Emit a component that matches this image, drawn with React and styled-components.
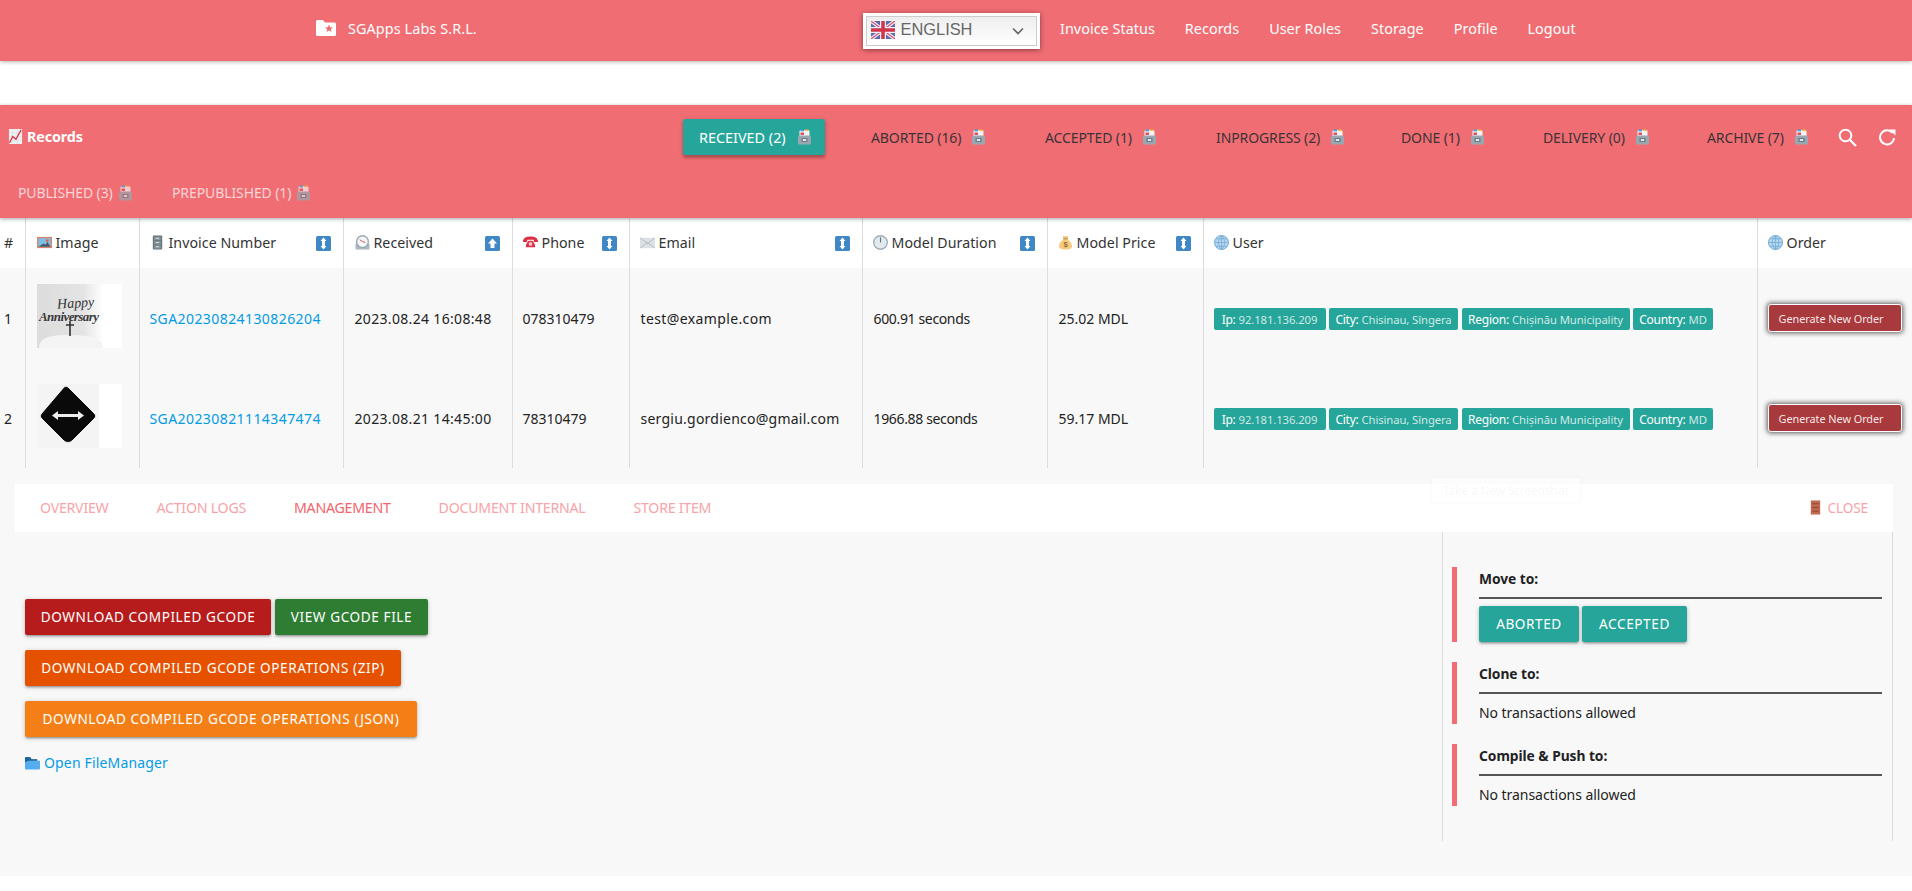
import React from "react";
import styled, { createGlobalStyle } from "styled-components";

const RED = "#f06d73";
const TEAL = "#26a69a";

const Global = createGlobalStyle`
  html, body { margin: 0; padding: 0; background: #fff; }
  body { font-family: "Noto Sans", "Open Sans", sans-serif; font-size: 14px; color: #222; overflow: hidden; }
  * { box-sizing: border-box; }
`;

const Page = styled.div`width: 1912px; height: 891px; overflow: hidden; background: #fff;`;

const Header = styled.header`
  height: 61px; background: ${RED}; display: flex; align-items: center; padding-left: 316px;
  box-shadow: 0 1px 4px rgba(0,0,0,.3); color: #fff;
`;
const Brand = styled.div`width: 547px; display: flex; align-items: center; gap: 12px; font-size: 14.4px; letter-spacing: .1px; margin-top: -5px;`;
const LangSelect = styled.div`
  width: 177px; height: 36px; background: #fff; padding: 3px; box-shadow: 0 1px 5px rgba(0,0,0,.45); margin-right: 20px; flex: none;
`;
const LangInner = styled.div`
  height: 100%; border: 1px solid #ccc; background: linear-gradient(#eee, #fff); display: flex; align-items: center;
  padding: 0 12px 0 4px; font-family: "Liberation Sans", sans-serif; font-size: 16.4px; color: #666;
  justify-content: space-between;
`;
const LangLabel = styled.span`display: flex; align-items: center; gap: 5.5px; margin-top: -2px;`;
const NavLinks = styled.nav`display: flex; gap: 30px; margin-top: -5px;`;
const NavLink = styled.a`color: #fff; font-size: 14.4px; letter-spacing: .03px; white-space: nowrap;`;

const Toolbar = styled.section`
  margin-top: 44px; height: 113px; background: ${RED}; box-shadow: 0 1px 4px rgba(0,0,0,.35); position: relative; z-index: 1;
`;
const ToolRow = styled.div`display: flex; align-items: center; height: ${p => p.$h}px; padding-left: ${p => p.$pad}px;`;
const ToolTitle = styled.div`
  width: 675px; font-weight: 700; font-size: 14.4px; color: #fff; display: flex; align-items: center; gap: 4px; letter-spacing: -.15px;
  margin-top: -1px;
`;
const Tab = styled.div`
  width: ${p => p.$w}px; flex: none; display: flex; align-items: center; gap: ${p => p.$muted ? 5 : 10}px; font-size: 14px; letter-spacing: -.1px;
  color: ${p => p.$muted ? "rgba(255,255,255,.72)" : "#3c3336"}; white-space: nowrap;
`;
const TabIcon = styled.span`display: flex; opacity: ${p => p.$muted ? .7 : 1};`;
const ActiveTab = styled.div`
  width: 142px; height: 36px; margin-right: 46px; flex: none; background: ${TEAL}; color: #fff; border-radius: 2px; display: flex; align-items: center;
  padding-left: 16px; gap: 11px; font-size: 14.4px; letter-spacing: 0;
  box-shadow: 0 3px 3px rgba(0,0,0,.22), 0 1px 5px rgba(0,0,0,.15);
`;
const ToolIcon = styled.div`width: ${p => p.$w}px; flex: none; display: flex; align-items: center;`;

const Table = styled.table`
  width: 1912px; table-layout: fixed; border-collapse: collapse;
`;
const Th = styled.th`
  height: 50px; background: #fff; border-left: ${p => p.$first ? "none" : "1px solid #ddd"}; padding: 0; font-weight: 400; text-align: left;
  font-size: 14.2px; color: #333; letter-spacing: .05px;
`;
const ThInner = styled.div`display: flex; align-items: center; justify-content: space-between; padding: 0 ${p => p.$right ?? 12}px 0 ${p => p.$left ?? 10}px;`;
const ThLabel = styled.span`display: flex; align-items: center; gap: 4px; white-space: nowrap; margin-top: -2px;`;
const Tr = styled.tr`height: 100px; background: #f8f8f8;`;
const Td = styled.td`
  border-left: ${p => p.$first ? "none" : "1px solid #ddd"}; padding: 0 0 0 ${p => p.$pad ?? 10}px; font-size: 14px; color: #222; white-space: nowrap;
  letter-spacing: ${p => p.$ls ?? 0}px;
`;
const InvoiceLink = styled.a`color: #039be5; letter-spacing: .42px;`;
const Thumb = styled.div`width: 85px; height: 64px; display: block; margin-top: -4px;`;
const Chips = styled.div`display: flex; gap: 3.5px; margin-top: 2px;`;
const Chip = styled.span`
  height: 22px; width: ${p => p.$w}px; background: ${TEAL}; border-radius: 2px; color: #fff; display: flex; align-items: center; justify-content: center; gap: 3px;
  font-size: 12px; letter-spacing: -.25px;
`;
const ChipValue = styled.span`color: rgba(255,255,255,.78); font-size: 11.3px;letter-spacing: -.1px;`;
const OrderButton = styled.button`
  width: 134px; height: 28px; background: #a8393c; color: rgba(255,255,255,.9); border: 1px solid #fff; border-radius: 3px; text-align: left;
  box-shadow: 0 0 5px 1px rgba(0,0,0,.65); font: 400 10.9px "Noto Sans", sans-serif; letter-spacing: -.05px; padding: 0 0 0 10px; display: block;
`;

const Detail = styled.section`
  position: relative; height: 408px; background: #f8f8f8; padding: 16px 19px 0 15px;
`;
const Tooltip = styled.div`
  position: absolute; left: 1432px; top: 10px; width: 148px; height: 24px; display: flex; align-items: center; justify-content: center;
  font-size: 12px; letter-spacing: -.2px; color: rgba(0,0,0,.05); background: rgba(255,255,255,.5); box-shadow: 0 0 4px rgba(0,0,0,.04); z-index: 2;
`;
const DetailTabs = styled.div`height: 48px; background: #fff; display: flex; align-items: center; padding: 0 25px 0 25px; justify-content: space-between;`;
const DetailTabList = styled.div`display: flex; gap: 48px; margin-top: -2px;`;
const DetailTab = styled.a`
  font-size: 14.2px; letter-spacing: -.26px; color: ${p => p.$active ? "#f2646c" : "#f7a3a8"}; white-space: nowrap;
`;
const CloseLink = styled.a`display: flex; align-items: center; gap: 4px; font-size: 13.6px; letter-spacing: -.1px; color: #f7a3a8; margin-top: -1px;`;
const DetailBody = styled.div`display: flex; align-items: flex-start;`;
const LeftPane = styled.div`flex: 1; padding: 67px 0 0 10px;`;
const ButtonRow = styled.div`display: flex; gap: 4px; margin-bottom: 15px;`;
const Btn = styled.a`
  height: 36px; width: ${p => p.$w}px; background: ${p => p.$bg}; color: #fff; border-radius: 2px; display: flex; align-items: center; justify-content: center;
  font-size: 13.6px; letter-spacing: .58px; white-space: nowrap; padding-bottom: 2px;
  box-shadow: 0 2px 2px rgba(0,0,0,.14), 0 3px 1px -2px rgba(0,0,0,.12), 0 1px 5px rgba(0,0,0,.2);
`;
const FileLink = styled.a`display: flex; align-items: center; gap: 4px; color: #039be5; font-size: 14px; margin-top: 16px; letter-spacing: .16px;`;
const RightPane = styled.aside`
  width: 451px; height: 309px; border-left: 1px solid #ddd; border-right: 1px solid #ddd; padding: 35px 10px 0 9px; display: flex; flex-direction: column; gap: 20px; flex: none;
`;
const Transition = styled.div`border-left: 5px solid ${RED}; padding-left: 22px; height: ${p => p.$h}px;`;
const TransitionTitle = styled.div`height: 30px; padding-bottom: 8px; display: flex; align-items: center; font-weight: 700; font-size: 13.8px; color: #222; letter-spacing: -.05px;`;
const Rule = styled.div`height: 2px; background: #555;`;
const Note = styled.div`margin-top: 9px; font-size: 14px; line-height: 20px; color: #222; letter-spacing: -.05px;`;
const MoveButtons = styled.div`display: flex; gap: 3px; margin-top: 7px;`;

const Box = () => (
  <svg width="15" height="16" viewBox="0 0 15 16" style={{ flex: "none" }}>
    <path d="M2.500 7V2.500Q2.500 1 4 1h7q1.500 0 1.500 1.500V7z" fill="#f3f3f3" />
    <rect x="3.500" y="0.500" width="3.500" height="1.800" fill="#3aa0dc" />
    <rect x="8" y="0.500" width="3.500" height="1.500" fill="#f4b942" />
    <rect x="3.500" y="3.500" width="3.500" height="2.500" fill="#e0506a" />
    <path d="M2.500 6.500h10L14 8v6.500q0 1-1 1H2q-1 0-1-1V8z" fill="#99a7b1" />
    <rect x="4.500" y="9" width="6" height="4" rx=".5" fill="#6b7a84" />
    <rect x="5.800" y="10" width="3.400" height="2" fill="#e3e7ea" />
  </svg>
);
const Sort = ({ up }) => (
  <svg width="15" height="15" viewBox="0 0 15 15" style={{ flex: "none" }}>
    <rect width="15" height="15" rx="1.5" fill="#3f88c5" />
    {up
      ? <path d="M7.5 2.5 12 7.5H9.5V12h-4V7.5H3z" fill="#fff" />
      : <path d="M7.5 1.5 10.5 5H9v5h1.5l-3 3.5-3-3.5H6V5H4.500z" fill="#fff" />}
  </svg>
);
const Ico = ({ children, w = 15, h = 15 }) => (
  <svg width={w} height={h} viewBox="0 0 16 16" style={{ flex: "none" }}>{children}</svg>
);
const PictureIcon = () => <Ico><rect y="2" width="16" height="12" fill="#d9846d" /><rect x="1.500" y="3.500" width="13" height="9" fill="#7cc0e8" /><path d="M1.500 12.500 7 9l2 1.500 2-3 3.500 5z" fill="#4b5a66" /><circle cx="11" cy="6" r="1.500" fill="#e8614f" /></Ico>;
const CabinetIcon = () => <Ico><rect x="3" y="0.500" width="10" height="15" rx="1" fill="#66757f" /><rect x="4.500" y="2" width="7" height="3.500" fill="#8a979f" /><rect x="4.500" y="6.500" width="7" height="3.500" fill="#8a979f" /><rect x="4.500" y="11" width="7" height="3.500" fill="#8a979f" /><rect x="6.500" y="3" width="3" height="1" fill="#ddd" /><rect x="6.500" y="7.500" width="3" height="1" fill="#ddd" /><rect x="6.500" y="12" width="3" height="1" fill="#ddd" /></Ico>;
const MantelIcon = () => <Ico><rect x="0.500" y="9" width="15" height="6.500" rx="1" fill="#aab8c2" /><circle cx="8" cy="7" r="7" fill="#99aab5" /><circle cx="8" cy="7" r="5.500" fill="#f5f8fa" /><path d="M8 7 5 5M8 7l3 1" stroke="#d9405b" strokeWidth="1" /></Ico>;
const PhoneIcon = () => <Ico><path d="M0 6C1 2 5 1.500 8 1.500s7 .5 8 4.500v1.500h-4.500V5h-7v2.500H0z" fill="#dd2e44" /><path d="M3 13c0-4 2-6 3-7h4c1 1 3 3 3 7z" fill="#dd2e44" /><circle cx="8" cy="9.500" r="2" fill="#f7c4cb" /></Ico>;
const MailIcon = () => <Ico><rect y="3" width="16" height="11" fill="#dbe1e5" /><path d="M0 14 8 8l8 6M0 3l8 6 8-6" stroke="#a7b4bd" strokeWidth=".8" fill="none" /></Ico>;
const ClockIcon = () => <Ico><circle cx="8" cy="8" r="8" fill="#9fb0bb" /><circle cx="8" cy="8" r="6.500" fill="#e3eaee" /><path d="M8 2.500V8" stroke="#66757f" strokeWidth="1.200" /></Ico>;
const BagIcon = () => <Ico><path d="M5 1c1 .6 5 .6 6 0l-1 3.500H6z" fill="#f2c46e" /><path d="M6 4.500h4c3 2 5 5 5 7.500 0 2.500-2.500 3.500-7 3.500S1 14.500 1 12c0-2.500 2-5.500 5-7.500z" fill="#f6cb7c" /><rect x="5.500" y="3.500" width="5" height="1.200" fill="#b98a4b" /><text x="8" y="13" fontSize="8" fontWeight="700" textAnchor="middle" fill="#8d6b3b" fontFamily="Liberation Sans">$</text></Ico>;
const GlobeIcon = () => <Ico><circle cx="8" cy="8" r="7.500" fill="#b7d6ee" stroke="#6ea9d6" /><path d="M.5 8h15M8 .5v15M2 4h12M2 12h12M8 .5C3.500 4.500 3.500 11.500 8 15.500M8 .5c4.500 4 4.500 11 0 15" stroke="#6ea9d6" strokeWidth=".8" fill="none" /></Ico>;
const ChartIcon = () => <Ico><rect x="1" y="0" width="14" height="16" fill="#eef1f3" /><path d="M1 4h14M1 8h14M1 12h14M5 0v16M10 0v16" stroke="#d2d9de" strokeWidth=".5" /><path d="M1.500 15 5 8l3.500 3L14 1" stroke="#e0304a" strokeWidth="1.400" fill="none" /></Ico>;
const DoorIcon = () => <Ico><rect x="3" y="0.500" width="10" height="15" fill="#c1694f" /><path d="M4.500 4h7M4.500 8h7M4.500 12h7" stroke="#8f4b37" strokeWidth="1.200" /></Ico>;
const OpenFolder = () => <Ico><path d="M0 2.500h5.500L7 4.500h6v2H0z" fill="#226699" /><path d="M0 6h16v8.500a1 1 0 0 1-1 1H1a1 1 0 0 1-1-1z" fill="#55acee" /><path d="M0 2.500h5.500L7 4.500h6V5H5L0 8z" fill="#226699" /></Ico>;
const StarFolder = () => (
  <svg width="20" height="16" viewBox="0 0 20 16" style={{ flex: "none" }}>
    <path d="M1.500 0H7l2 2.500h9.500A1.500 1.500 0 0 1 20 4v10.500a1.500 1.500 0 0 1-1.500 1.500h-17A1.500 1.500 0 0 1 0 14.500V1.500A1.500 1.500 0 0 1 1.500 0z" fill="#fff" />
    <path d="m13 4.500 1.100 2.700 2.900.2-2.200 1.900.7 2.800-2.500-1.500-2.500 1.500.7-2.800L9 7.400l2.900-.2z" fill={RED} />
  </svg>
);
const Flag = () => (
  <svg width="24" height="18" viewBox="0 0 24 18" style={{ flex: "none" }}>
    <rect width="24" height="18" fill="#5d6aa8" />
    <path d="M0 0 24 18M24 0 0 18" stroke="#eef" strokeWidth="3.500" />
    <path d="M0 0 24 18M24 0 0 18" stroke="#d8505f" strokeWidth="1.200" />
    <path d="M12 0v18M0 9h24" stroke="#eef" strokeWidth="6" />
    <path d="M12 0v18M0 9h24" stroke="#d0354a" strokeWidth="3.500" />
  </svg>
);
const Chevron = () => (
  <svg width="12" height="8" viewBox="0 0 12 8" style={{ flex: "none" }}><path d="M1 1.500 6 6.500l5-5" stroke="#666" strokeWidth="1.700" fill="none" /></svg>
);
const SearchIcon = () => (
  <svg width="19" height="19" viewBox="0 0 19 19"><circle cx="7.500" cy="7.500" r="5.800" fill="none" stroke="#fff" strokeWidth="2" /><path d="m12 12 6 6" stroke="#fff" strokeWidth="2.200" /></svg>
);
const RefreshIcon = () => (
  <svg width="18" height="18" viewBox="0 0 18 18"><path d="M14.500 5A7 7 0 1 0 16 10" fill="none" stroke="#fff" strokeWidth="2" /><path d="M11 1h6.500v6z" fill="#fff" transform="translate(0 .5)" /></svg>
);
const ThumbOne = () => (
  <Thumb as="svg" viewBox="0 0 85 64">
    <defs>
      <linearGradient id="fade" x1="0" y1="0" x2="1" y2="0"><stop offset="0" stopColor="#dcdcdc" /><stop offset=".7" stopColor="#e4e4e4" /><stop offset="1" stopColor="#fff" /></linearGradient>
    </defs>
    <rect width="85" height="64" fill="#fff" />
    <rect width="66" height="64" fill="url(#fade)" />
    <path d="M2 64c0-10 10-13 30-13s34 3 34 13z" fill="#f4f4f4" />
    <text x="20" y="24" fontSize="14" fontStyle="italic" fill="#333" fontFamily="Liberation Serif" transform="rotate(-4 32 20)">Happy</text>
    <text x="2" y="37" fontSize="13" fontStyle="italic" fontWeight="700" fill="#3a3a3a" fontFamily="Liberation Serif" textLength="60">Anniversary</text>
    <path d="M33 37v15M29 41h8" stroke="#333" strokeWidth="1.600" />
  </Thumb>
);
const ThumbTwo = () => (
  <Thumb as="svg" viewBox="0 0 85 64">
    <rect width="85" height="64" fill="#fff" />
    <rect width="62" height="64" fill="#f4f4f4" />
    <path d="M31 3 58 30a3 3 0 0 1 0 4L35 57a6 6 0 0 1-8 0L4 34a3 3 0 0 1 0-4L27 3a3 3 0 0 1 4 0z" fill="#0a0a0a" stroke="#f4f4f4" />
    <path d="M15 31.500 21 27v3h20v-3l6 4.500-6 4.500v-3H21v3z" fill="#eee" />
  </Thumb>
);

const Status = ({ label, w, muted }) => (
  <Tab $w={w} $muted={muted}>{label}<TabIcon $muted={muted}><Box /></TabIcon></Tab>
);
const UserChips = () => (
  <Chips>
    <Chip $w={112}>Ip: <ChipValue>92.181.136.209</ChipValue></Chip>
    <Chip $w={129}>City: <ChipValue>Chisinau, Sîngera</ChipValue></Chip>
    <Chip $w={168}>Region: <ChipValue>Chișinău Municipality</ChipValue></Chip>
    <Chip $w={80}>Country: <ChipValue>MD</ChipValue></Chip>
  </Chips>
);
const widths = [25, 114, 204, 169, 117, 233, 185, 156, 554, 155];
const Column = ({ icon, label, sort, up, left = 10, right = 12 }) => (
  <ThInner $left={left} $right={right}>
    <ThLabel>{icon}{label}</ThLabel>
    {sort && <Sort up={up} />}
  </ThInner>
);
const rows = [
  { n: 1, thumb: <ThumbOne />, inv: "SGA20230824130826204", date: "2023.08.24 16:08:48", phone: "078310479", mail: "test@example.com", mailLs: 0.38, dur: "600.91 seconds", price: "25.02 MDL" },
  { n: 2, thumb: <ThumbTwo />, inv: "SGA20230821114347474", date: "2023.08.21 14:45:00", phone: "78310479", mail: "sergiu.gordienco@gmail.com", mailLs: 0.24, dur: "1966.88 seconds", price: "59.17 MDL" },
];

export default function App() {
  return (
    <Page>
      <Global />
      <Header>
        <Brand><StarFolder />SGApps Labs S.R.L.</Brand>
        <LangSelect>
          <LangInner>
            <LangLabel><Flag />ENGLISH</LangLabel>
            <Chevron />
          </LangInner>
        </LangSelect>
        <NavLinks>
          <NavLink>Invoice Status</NavLink>
          <NavLink>Records</NavLink>
          <NavLink>User Roles</NavLink>
          <NavLink>Storage</NavLink>
          <NavLink>Profile</NavLink>
          <NavLink>Logout</NavLink>
        </NavLinks>
      </Header>
      <Toolbar>
        <ToolRow $h={64} $pad={8}>
          <ToolTitle><ChartIcon />Records</ToolTitle>
          <ActiveTab>RECEIVED (2)<Box /></ActiveTab>
          <Status label="ABORTED (16)" w={174} />
          <Status label="ACCEPTED (1)" w={171} />
          <Status label="INPROGRESS (2)" w={185} />
          <Status label="DONE (1)" w={142} />
          <Status label="DELIVERY (0)" w={164} />
          <Status label="ARCHIVE (7)" w={131} />
          <ToolIcon $w={40}><SearchIcon /></ToolIcon>
          <ToolIcon $w={18}><RefreshIcon /></ToolIcon>
        </ToolRow>
        <ToolRow $h={47} $pad={18}>
          <Status label="PUBLISHED (3)" w={154} muted />
          <Status label="PREPUBLISHED (1)" w={200} muted />
        </ToolRow>
      </Toolbar>
      <Table>
        <colgroup>{widths.map((w, i) => <col key={i} style={{ width: w }} />)}</colgroup>
        <thead>
          <tr>
            <Th $first><ThInner $left={4} $right={0}><ThLabel>#</ThLabel></ThInner></Th>
            <Th><Column icon={<PictureIcon />} label="Image" left={11} /></Th>
            <Th><Column icon={<CabinetIcon />} label="Invoice Number" sort /></Th>
            <Th><Column icon={<MantelIcon />} label="Received" sort up left={11} /></Th>
            <Th><Column icon={<PhoneIcon />} label="Phone" sort /></Th>
            <Th><Column icon={<MailIcon />} label="Email" sort /></Th>
            <Th><Column icon={<ClockIcon />} label="Model Duration" sort /></Th>
            <Th><Column icon={<BagIcon />} label="Model Price" sort /></Th>
            <Th><Column icon={<GlobeIcon />} label="User" /></Th>
            <Th><Column icon={<GlobeIcon />} label="Order" /></Th>
          </tr>
        </thead>
        <tbody>
          {rows.map(r => (
            <Tr key={r.n}>
              <Td $first $pad={4}>{r.n}</Td>
              <Td $pad={11}>{r.thumb}</Td>
              <Td $pad={10}><InvoiceLink>{r.inv}</InvoiceLink></Td>
              <Td $pad={11} $ls={0.33}>{r.date}</Td>
              <Td>{r.phone}</Td>
              <Td $pad={11} $ls={r.mailLs}>{r.mail}</Td>
              <Td $pad={11} $ls={-0.35}>{r.dur}</Td>
              <Td $pad={11}>{r.price}</Td>
              <Td $pad={10}><UserChips /></Td>
              <Td $pad={10}><OrderButton>Generate New Order</OrderButton></Td>
            </Tr>
          ))}
        </tbody>
      </Table>
      <Detail>
        <Tooltip>Take a New Screenshot</Tooltip>
        <DetailTabs>
          <DetailTabList>
            <DetailTab>OVERVIEW</DetailTab>
            <DetailTab>ACTION LOGS</DetailTab>
            <DetailTab $active>MANAGEMENT</DetailTab>
            <DetailTab>DOCUMENT INTERNAL</DetailTab>
            <DetailTab>STORE ITEM</DetailTab>
          </DetailTabList>
          <CloseLink><DoorIcon />CLOSE</CloseLink>
        </DetailTabs>
        <DetailBody>
          <LeftPane>
            <ButtonRow>
              <Btn $w={246} $bg="#b71c1c">DOWNLOAD COMPILED GCODE</Btn>
              <Btn $w={153} $bg="#2e7d32">VIEW GCODE FILE</Btn>
            </ButtonRow>
            <ButtonRow><Btn $w={376} $bg="#e65100">DOWNLOAD COMPILED GCODE OPERATIONS (ZIP)</Btn></ButtonRow>
            <ButtonRow><Btn $w={392} $bg="#f57f17">DOWNLOAD COMPILED GCODE OPERATIONS (JSON)</Btn></ButtonRow>
            <FileLink><OpenFolder />Open FileManager</FileLink>
          </LeftPane>
          <RightPane>
            <Transition $h={75}>
              <TransitionTitle>Move to:</TransitionTitle>
              <Rule />
              <MoveButtons>
                <Btn $w={100} $bg={TEAL}>ABORTED</Btn>
                <Btn $w={105} $bg={TEAL}>ACCEPTED</Btn>
              </MoveButtons>
            </Transition>
            <Transition $h={62}>
              <TransitionTitle>Clone to:</TransitionTitle>
              <Rule />
              <Note>No transactions allowed</Note>
            </Transition>
            <Transition $h={62}>
              <TransitionTitle>Compile &amp; Push to:</TransitionTitle>
              <Rule />
              <Note>No transactions allowed</Note>
            </Transition>
          </RightPane>
        </DetailBody>
      </Detail>
    </Page>
  );
}
